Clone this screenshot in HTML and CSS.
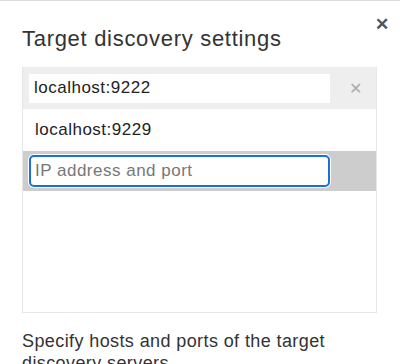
FILE: index.html
```html
<!DOCTYPE html>
<html lang="en">
  <head>
    <meta charset="UTF-8" />
    <meta name="viewport" content="width=device-width, initial-scale=1.0" />
    <title>Target discovery settings</title>
    <link rel="stylesheet" href="styles.css">
  </head>
  <body>
    <div class="dialog">
      <button class="close-button" title="Close">&#x2715;</button>
      <h1 class="title">Target discovery settings</h1>

      <div class="target-list">
        <div class="row row-editing">
          <input class="field" type="text" value="localhost:9222" />
          <span class="remove">&#x2715;</span>
        </div>
        <div class="row">
          <span class="host">localhost:9229</span>
        </div>
        <div class="row row-new">
          <input class="field field-focus" type="text" placeholder="IP address and port" />
        </div>
      </div>

      <p class="hint">Specify hosts and ports of the target discovery servers</p>
    </div>
  </body>
</html>
```

FILE: styles.css
```css
body {
  font-family: "Liberation Sans", Arial, sans-serif;
  margin: 0;
  padding: 0;
  background-color: #fff;
  border-top: 1px solid #dcdcdc;
  overflow: hidden;
  height: 363px;
}
.dialog {
  position: relative;
  padding: 0 23px 0 22px;
}
.close-button {
  position: absolute;
  top: 13px;
  right: 11px;
  border: none;
  background: none;
  padding: 0;
  font-size: 17px;
  font-weight: bold;
  color: #555;
  cursor: pointer;
}
.title {
  margin: 0;
  padding-top: 24px;
  font-size: 22px;
  letter-spacing: 0.7px;
  line-height: 28px;
  font-weight: normal;
  color: #333;
  margin-bottom: 14px;
}
.target-list {
  height: 246px;
  box-sizing: border-box;
  border: 1px solid #e6e6e6;
  border-top: none;
}
.row {
  display: flex;
  align-items: center;
  height: 42px;
  padding: 0 6px;
  font-size: 17px;
  letter-spacing: 0.5px;
  color: #222;
}
.row-editing {
  background-color: #eee;
}
.row-new {
  height: 40px;
  background-color: #cdcdcd;
}
.host {
  padding-left: 6px;
}
.field {
  width: 301px;
  height: 29px;
  box-sizing: border-box;
  border: none;
  padding: 0 5px;
  font-family: inherit;
  font-size: 17px;
  letter-spacing: 0.5px;
  color: #222;
  background: #fff;
  outline: none;
}
.field-focus {
  width: 301px;
  height: 32px;
  border: 2px solid #1a6fd8;
  border-radius: 5px;
  padding: 0 4px;
  box-shadow: 0 0 0 1px #fff;
}
.field-focus::placeholder {
  color: #777;
}
.remove {
  margin-left: 19px;
  font-size: 16px;
  letter-spacing: 0;
  color: #aaa;
}
.hint {
  margin: 17px 0 0;
  width: 340px;
  font-size: 18px;
  letter-spacing: 0.4px;
  line-height: 22px;
  color: #333;
}
```
